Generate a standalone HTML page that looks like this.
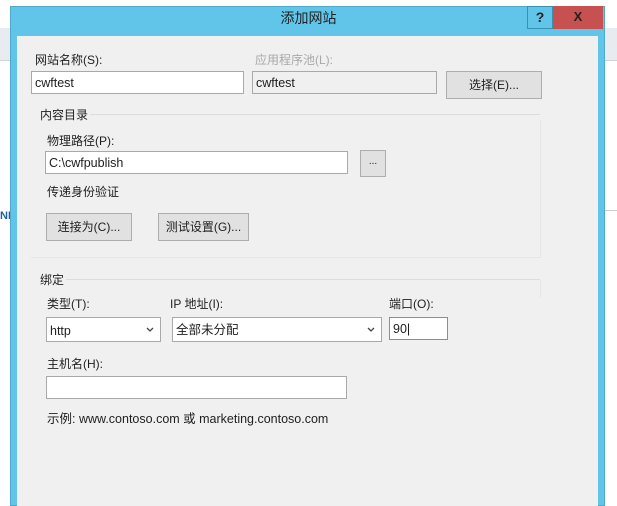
<!DOCTYPE html>
<html><head><meta charset="utf-8"><style>
*{margin:0;padding:0;box-sizing:border-box}
body{width:617px;height:500px;overflow:hidden;background:#fff;font-family:"Liberation Sans","Noto Sans CJK SC",sans-serif;font-size:12px;color:#1e1e1e;position:relative}
.a{position:absolute}
.inp{position:absolute;background:#fff;border:1px solid #a9a9a9;height:23px;padding:3px 3px;font-size:12.5px;line-height:16px}
.btn{position:absolute;background:#e1e1e1;border:1px solid #adadad;text-align:center;font-size:12px}
.lbl{position:absolute;font-size:12px}
.arr{position:absolute;right:6px;top:9px}
</style></head><body>
<div class="a" style="left:0;top:28px;width:617px;height:32px;background:#e8ebef"></div>
<div class="a" style="left:0;top:60px;width:617px;height:1px;background:#d0d4da"></div>
<div class="a" style="left:0;top:210px;width:10px;height:20px;color:#1f5fa8;font-weight:bold;font-size:11px">NE</div>
<div class="a" style="left:604px;top:210px;width:13px;height:1px;background:#ccc"></div>
<div class="a" style="left:10px;top:6px;width:595px;height:500px;background:#60c5e9;border:1px solid #4fa9cc"></div>
<div class="a" style="left:17px;top:36px;width:581px;height:470px;background:#f0f0f0"></div>
<div class="a" style="left:0;top:8px;width:617px;text-align:center;font-size:14px;color:#222">添加网站</div>
<div class="a" style="left:527px;top:6px;width:26px;height:23px;border:1px solid #3b8fb0;text-align:center;font-weight:bold;font-size:14px;line-height:21px;color:#222">?</div>
<div class="a" style="left:553px;top:6px;width:50px;height:23px;background:#c75050;text-align:center;font-weight:bold;font-size:13px;line-height:22px;color:#222">X</div>

<div class="lbl" style="left:35px;top:51px">网站名称(S):</div>
<div class="inp" style="left:31px;top:71px;width:213px">cwftest</div>
<div class="lbl" style="left:255px;top:51px;color:#a8a8a8">应用程序池(L):</div>
<div class="inp" style="left:252px;top:71px;width:185px;background:#f0f0f0">cwftest</div>
<div class="btn" style="left:446px;top:71px;width:96px;height:28px;line-height:26px">选择(E)...</div>

<div class="lbl" style="left:40px;top:106px">内容目录</div>
<div class="a" style="left:90px;top:114px;width:450px;height:1px;background:#dcdcdc"></div>
<div class="a" style="left:31px;top:120px;width:510px;height:138px;border-right:1px solid #e6e6e6;border-bottom:1px solid #e6e6e6"></div>
<div class="lbl" style="left:47px;top:132px">物理路径(P):</div>
<div class="inp" style="left:45px;top:151px;width:303px">C:\cwfpublish</div>
<div class="btn" style="left:360px;top:150px;width:26px;height:27px;line-height:22px;font-size:10px">...</div>
<div class="lbl" style="left:47px;top:183px">传递身份验证</div>
<div class="btn" style="left:46px;top:213px;width:86px;height:28px;line-height:26px">连接为(C)...</div>
<div class="btn" style="left:158px;top:213px;width:91px;height:28px;line-height:26px">测试设置(G)...</div>

<div class="lbl" style="left:40px;top:271px">绑定</div>
<div class="a" style="left:66px;top:279px;width:474px;height:1px;background:#dcdcdc"></div>
<div class="a" style="left:540px;top:280px;width:1px;height:18px;background:#e6e6e6"></div>
<div class="lbl" style="left:47px;top:295px">类型(T):</div>
<div class="lbl" style="left:170px;top:295px">IP 地址(I):</div>
<div class="lbl" style="left:389px;top:295px">端口(O):</div>
<div class="inp" style="left:46px;top:317px;width:115px;height:25px;padding-top:5px">http<svg class="arr" width="8" height="6"><path d="M1 1L4 4L7 1" stroke="#444" fill="none" stroke-width="1.3"/></svg></div>
<div class="inp" style="left:172px;top:317px;width:210px;height:25px;padding-top:4px">全部未分配<svg class="arr" width="8" height="6"><path d="M1 1L4 4L7 1" stroke="#444" fill="none" stroke-width="1.3"/></svg></div>
<div class="inp" style="left:389px;top:317px;width:59px;border-color:#5b9bd5">90|</div>
<div class="lbl" style="left:47px;top:355px">主机名(H):</div>
<div class="inp" style="left:46px;top:376px;width:301px"></div>
<div class="lbl" style="left:47px;top:408px;font-size:12.5px">示例: www.contoso.com 或 marketing.contoso.com</div>
</body></html>
